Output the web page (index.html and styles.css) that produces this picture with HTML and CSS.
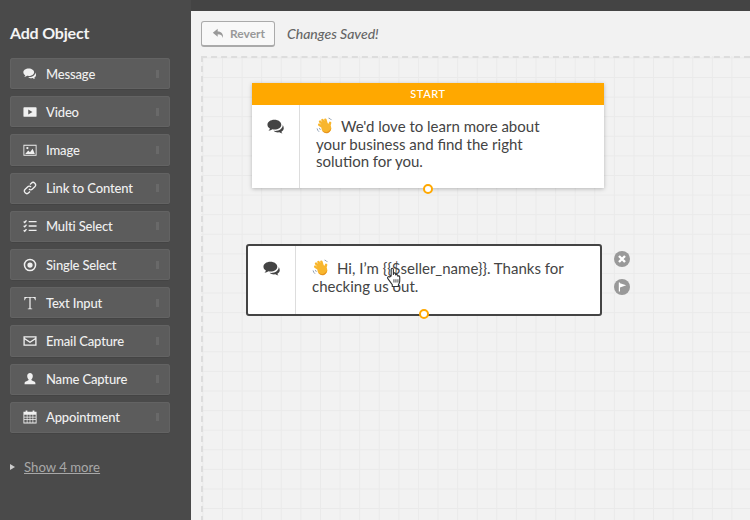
FILE: index.html
```html
<!DOCTYPE html>
<html lang="en">
<head>
    <meta charset="UTF-8">
    <title>Add Object</title>
    <link rel="stylesheet" href="styles.css">
</head>
<body>
    <!-- shared icons -->
    <svg class="sprite" width="0" height="0">
        <symbol id="chat" viewBox="0 0 16 16">
            <path d="M6.600 1.600C3 1.600.4 3.500.4 6c0 1.400.9 2.600 2.200 3.400-.2.800-.7 1.500-1.300 2 1.300-.1 2.600-.6 3.500-1.300.6.100 1.200.2 1.800.2 3.500 0 6.100-1.900 6.100-4.300S10.100 1.600 6.600 1.600z"/>
            <path d="M14 6.200c.1 3-2.900 5.200-6.800 5.300-.5 0-.9 0-1.300-.1.900.9 2.300 1.400 3.900 1.400.4 0 .8 0 1.200-.1.700.6 1.700 1 2.800 1.100-.5-.4-.9-1-1-1.600 1.300-.7 2.100-1.800 2.100-3.100 0-1.100-.4-2-.9-2.800z"/>
        </symbol>
        <symbol id="wave" viewBox="0 0 16 16">
            <g fill="none" stroke="#f8b62d" stroke-width="2.300" stroke-linecap="round">
                <path d="M8 10.500L3 7.200M8.500 9L3.800 4.300M9.500 8.500L6 2.800M10.500 8L8.800 2.500M12 9.500l1.300-4"/>
            </g>
            <circle cx="9.800" cy="10.500" r="4.600" fill="#f8b62d"/>
            <path fill="#e5931f" d="M5.800 12.800c1.400 1.300 3.600 1.700 5.500.8 1.400-.7 2.300-1.900 2.600-3.300.3 2.100-.8 4-2.600 4.700-2.100.8-4.200 0-5.500-2.200z"/>
            <path fill="none" stroke="#8a9bb0" stroke-width=".9" d="M1 10.800c.3 1.300.9 2.300 1.900 3.100M3.200 10.300c.2.700.5 1.300 1 1.800M11.800 1c1.100.2 2.100.9 2.800 1.900"/>
        </symbol>
    </svg>

    <div class="app">
        <aside class="sidebar">
            <h2 class="sidebar-title">Add Object</h2>
            <ul class="object-list">
                <li class="object-item">
                    <svg class="object-icon" viewBox="0 0 16 16"><use href="#chat"/></svg>
                    <span>Message</span><i class="grip"></i>
                </li>
                <li class="object-item">
                    <svg class="object-icon" viewBox="0 0 16 16"><path fill-rule="evenodd" d="M1.500 2.500h13a1 1 0 0 1 1 1v9a1 1 0 0 1-1 1h-13a1 1 0 0 1-1-1v-9a1 1 0 0 1 1-1zM6 5.200v5.600L10.800 8z"/></svg>
                    <span>Video</span><i class="grip"></i>
                </li>
                <li class="object-item">
                    <svg class="object-icon" viewBox="0 0 16 16"><path fill-rule="evenodd" d="M.5 2h15v12.500H.5zM1.500 3v10.500h13V3z"/><path d="M2.500 12.500l3.500-4 2 2 3-4 2.500 6z"/><circle cx="5" cy="5.800" r="1.300"/></svg>
                    <span>Image</span><i class="grip"></i>
                </li>
                <li class="object-item">
                    <svg class="object-icon line" viewBox="0 0 16 16"><path d="M6.800 9.200a2.800 2.800 0 0 0 4 0l2.700-2.700a2.800 2.800 0 0 0-4-4L8 4"/><path d="M9.200 6.800a2.800 2.800 0 0 0-4 0L2.500 9.500a2.800 2.800 0 0 0 4 4L8 12"/></svg>
                    <span>Link to Content</span><i class="grip"></i>
                </li>
                <li class="object-item">
                    <svg class="object-icon line" viewBox="0 0 16 16"><path d="M.8 2.800l1.200 1.200L4 1.500M.8 7.800L2 9l2-2.500M.8 12.800L2 14l2-2.500M6.500 3h9M6.500 8h9M6.500 13h9"/></svg>
                    <span>Multi Select</span><i class="grip"></i>
                </li>
                <li class="object-item">
                    <svg class="object-icon" viewBox="0 0 16 16"><path fill-rule="evenodd" d="M8 .8a7.200 7.200 0 1 1 0 14.400A7.200 7.200 0 0 1 8 .8zm0 1.700a5.500 5.500 0 1 0 0 11 5.500 5.500 0 0 0 0-11z"/><circle cx="8" cy="8" r="3"/></svg>
                    <span>Single Select</span><i class="grip"></i>
                </li>
                <li class="object-item">
                    <svg class="object-icon" viewBox="0 0 16 16"><path d="M1.500 1h13v3.800h-.8c-.2-1.800-.8-2.800-2.500-2.800H8.700v11.300c0 .8.500 1 1.800 1v.7h-5v-.7c1.300 0 1.800-.2 1.800-1V2H4.800C3.100 2 2.500 3 2.300 4.800h-.8z"/></svg>
                    <span>Text Input</span><i class="grip"></i>
                </li>
                <li class="object-item">
                    <svg class="object-icon" viewBox="0 0 16 16"><path fill-rule="evenodd" d="M.5 2.500h15v11H.5zM2 4v.6l6 3.900 6-3.900V4zm0 2.300V12h12V6.300L8 10.200z"/></svg>
                    <span>Email Capture</span><i class="grip"></i>
                </li>
                <li class="object-item">
                    <svg class="object-icon" viewBox="0 0 16 16"><path d="M8 1c2 0 3.200 1.500 3.200 3.500S10.200 8 9.500 8.700c0 1 1 1.400 2.500 1.900 1.300.4 2.200 1 2.200 2.400v1H1.800v-1c0-1.400.9-2 2.200-2.400 1.500-.5 2.500-.9 2.500-1.900C5.800 8 4.800 6.500 4.800 4.500S6 1 8 1z"/></svg>
                    <span>Name Capture</span><i class="grip"></i>
                </li>
                <li class="object-item">
                    <svg class="object-icon" viewBox="0 0 16 16"><path fill-rule="evenodd" d="M3 .5h2v1.500h6V.5h2V2h2.500v13.500H.5V2H3zM1.500 5.500v2.200h2.800V5.500zm3.600 0v2.200h2.500V5.500zm3.300 0v2.200h2.500V5.500zm3.300 0v2.200h2.800V5.500zM1.500 8.500v2.200h2.800V8.500zm3.600 0v2.200h2.500V8.500zm3.300 0v2.200h2.500V8.500zm3.300 0v2.200h2.800V8.500zM1.500 11.500v2.800h2.800v-2.800zm3.600 0v2.800h2.500v-2.800zm3.300 0v2.800h2.500v-2.800zm3.300 0v2.800h2.800v-2.800z"/></svg>
                    <span>Appointment</span><i class="grip"></i>
                </li>
            </ul>
            <div class="show-more"><i class="show-arrow"></i><a class="show-link">Show 4 more</a></div>
        </aside>

        <main class="editor">
            <div class="toolbar">
                <button class="revert-btn" type="button">
                    <svg class="revert-icon" viewBox="0 0 16 16"><path d="M7 2L1 7l6 5V9c3.500 0 5.500 1.200 6.500 4.500.6-5-1.800-8-6.500-8z"/></svg>
                    Revert
                </button>
                <span class="save-status">Changes Saved!</span>
            </div>

            <div class="canvas">
                <!-- nodes sit on the free canvas -->
                <div class="node node-start">
                    <div class="node-head">START</div>
                    <div class="node-body">
                        <div class="node-type"><svg class="node-icon" viewBox="0 0 16 16"><use href="#chat"/></svg></div>
                        <p class="node-text"><svg class="wave" viewBox="0 0 16 16"><use href="#wave"/></svg>We'd love to learn more about your business and find the right solution for you.</p>
                    </div>
                    <i class="port"></i>
                </div>

                <div class="node node-selected">
                    <div class="node-body">
                        <div class="node-type"><svg class="node-icon" viewBox="0 0 16 16"><use href="#chat"/></svg></div>
                        <p class="node-text"><svg class="wave" viewBox="0 0 16 16"><use href="#wave"/></svg>Hi, I’m {{$seller_name}}. Thanks for checking us out.</p>
                    </div>
                    <i class="port"></i>
                    <div class="node-actions">
                        <span class="node-action"><svg viewBox="0 0 16 16"><path d="M5 5l6 6M11 5l-6 6" stroke="#fff" stroke-width="2.400" fill="none"/></svg></span>
                        <span class="node-action"><svg viewBox="0 0 16 16"><path d="M4.800 3.500h1.200v.8l6.200 1.900-6.200 2.400v4h-1.200z" fill="#fff"/></svg></span>
                    </div>
                </div>

                <svg class="hand-cursor" viewBox="2 1 14 18"><path d="M6 9V3.200c0-1.500 2-1.500 2 0V8l.2-1c.3-1 1.800-.8 1.800.3V8.500c.2-1 1.900-.9 1.900.2v.8c.3-.8 1.800-.7 1.800.4v3.600c0 1.500-.7 2.500-1.200 3.500v1.500H7v-1.500L3 11.500c-.9-1.200.6-2.500 1.700-1.500z" fill="#fff" stroke="#333" stroke-width="1"/><path d="M8.500 12v3M10.300 12v3M12.100 12v3" stroke="#333" stroke-width=".8"/></svg>
            </div>
        </main>
    </div>
</body>
</html>
```

FILE: styles.css
```css
html, body {
    margin: 0;
    padding: 0;
    height: 100%;
    overflow: hidden;
}
body {
    font-family: 'Lato', 'Open Sans', sans-serif;
    background: #444;
    color: #444;
}
.sprite {
    position: absolute;
}
.app {
    display: flex;
    height: 520px;
}

/* sidebar */
.sidebar {
    width: 191px;
    flex: none;
    box-sizing: border-box;
    padding: 23px 21px 0 10px;
    background: #4a4a4a;
}
.sidebar-title {
    margin: 0 0 15px;
    font-size: 16px;
    line-height: 20px;
    font-weight: 700;
    letter-spacing: -0.2px;
    color: #f4f4f4;
}
.object-list {
    list-style-type: none;
    margin: 0;
    padding: 0;
    display: flex;
    flex-direction: column;
    gap: 6px;
}
.object-item {
    display: flex;
    align-items: center;
    height: 32.200px;
    padding: 0 11px 0 13px;
    box-sizing: border-box;
    background: #5c5c5c;
    border-radius: 3px;
    border-bottom: 1px solid #444;
    box-shadow: inset 0 0 0 1px #636363;
    font-size: 13px;
    font-weight: 500;
    letter-spacing: -0.15px;
    color: #f0f0f0;
}
.object-item span {
    flex: 1;
    white-space: nowrap;
}
.object-icon {
    width: 14px;
    height: 14px;
    margin-right: 9px;
    fill: #f0f0f0;
    flex: none;
}
.object-icon.line {
    fill: none;
    stroke: #f0f0f0;
    stroke-width: 1.500;
}
.grip {
    width: 3px;
    height: 8px;
    background: #696969;
}
.show-more {
    display: flex;
    align-items: center;
    margin-top: 25px;
    font-size: 13.200px;
    color: #a8a8a8;
}
.show-arrow {
    width: 0;
    height: 0;
    margin-right: 9px;
    border-left: 5px solid #ccc;
    border-top: 3px solid transparent;
    border-bottom: 3px solid transparent;
}
.show-link {
    text-decoration: underline;
}

/* editor */
.editor {
    flex: 1;
    min-width: 0;
    margin-top: 11px;
    background: #f2f2f2;
}
.toolbar {
    display: flex;
    align-items: center;
    height: 45px;
    padding-left: 10px;
    box-sizing: border-box;
}
.revert-btn {
    display: flex;
    align-items: center;
    gap: 5px;
    width: 74px;
    height: 26px;
    padding: 0 0 0 10px;
    background: #f8f8f8;
    border: 1px solid #aaa;
    border-bottom-width: 2px;
    border-radius: 3px;
    font-family: inherit;
    font-size: 12px;
    font-weight: 700;
    color: #999;
}
.revert-icon {
    width: 13px;
    height: 13px;
    fill: #999;
}
.save-status {
    margin-left: 12px;
    font-size: 14px;
    font-style: italic;
    font-weight: 500;
    color: #666;
}
.canvas {
    position: relative;
    height: 464px;
    margin-left: 10px;
    border-top: 2px dashed #ddd;
    border-left: 2px dashed #ddd;
    background-image:
        linear-gradient(#eaeaea 1px, transparent 1px),
        linear-gradient(90deg, #eaeaea 1px, transparent 1px);
    background-size: 19.600px 19.600px;
    background-position: 19px 19px;
}

/* nodes */
.node {
    position: absolute;
    background: #fff;
    box-shadow: 0 1px 4px rgba(0, 0, 0, 0.25);
}
.node-start {
    left: 49px;
    top: 25px;
    width: 352px;
}
.node-selected {
    left: 43px;
    top: 186px;
    width: 352px;
    height: 68px;
    border: 2px solid #444;
    border-radius: 3px;
    box-shadow: none;
}
.node-head {
    height: 22px;
    line-height: 22px;
    background: #ffa800;
    color: #fff;
    font-size: 11px;
    font-weight: 500;
    letter-spacing: 0.6px;
    text-align: center;
}
.node-body {
    display: flex;
    height: 83px;
}
.node-selected .node-body {
    height: 100%;
}
.node-type {
    width: 47px;
    flex: none;
    border-right: 1px solid #ddd;
    text-align: center;
}
.node-icon {
    width: 18px;
    height: 18px;
    margin-top: 13px;
    fill: #444;
}
.node-selected .node-icon {
    margin-top: 14px;
}
.node-text {
    margin: 12px 0 0;
    padding: 0 55px 0 16px;
    font-size: 15px;
    line-height: 17.700px;
    color: #444;
}
.node-selected .node-text {
    margin-top: 13px;
    padding-right: 34px;
}
.wave {
    width: 17px;
    height: 17px;
    margin-right: 8px;
    vertical-align: -2px;
}
.port {
    position: absolute;
    left: 171px;
    bottom: -6px;
    width: 6px;
    height: 6px;
    background: #fff;
    border: 2px solid #ffa800;
    border-radius: 50%;
}
.node-selected .port {
    bottom: -5px;
}
.node-actions {
    position: absolute;
    left: 366px;
    top: 5px;
    display: flex;
    flex-direction: column;
    gap: 12px;
}
.node-action {
    width: 16px;
    height: 16px;
    background: #999;
    border-radius: 50%;
}
.node-action svg {
    display: block;
}
.hand-cursor {
    position: absolute;
    left: 183px;
    top: 209px;
    width: 17px;
    height: 20px;
}
```
